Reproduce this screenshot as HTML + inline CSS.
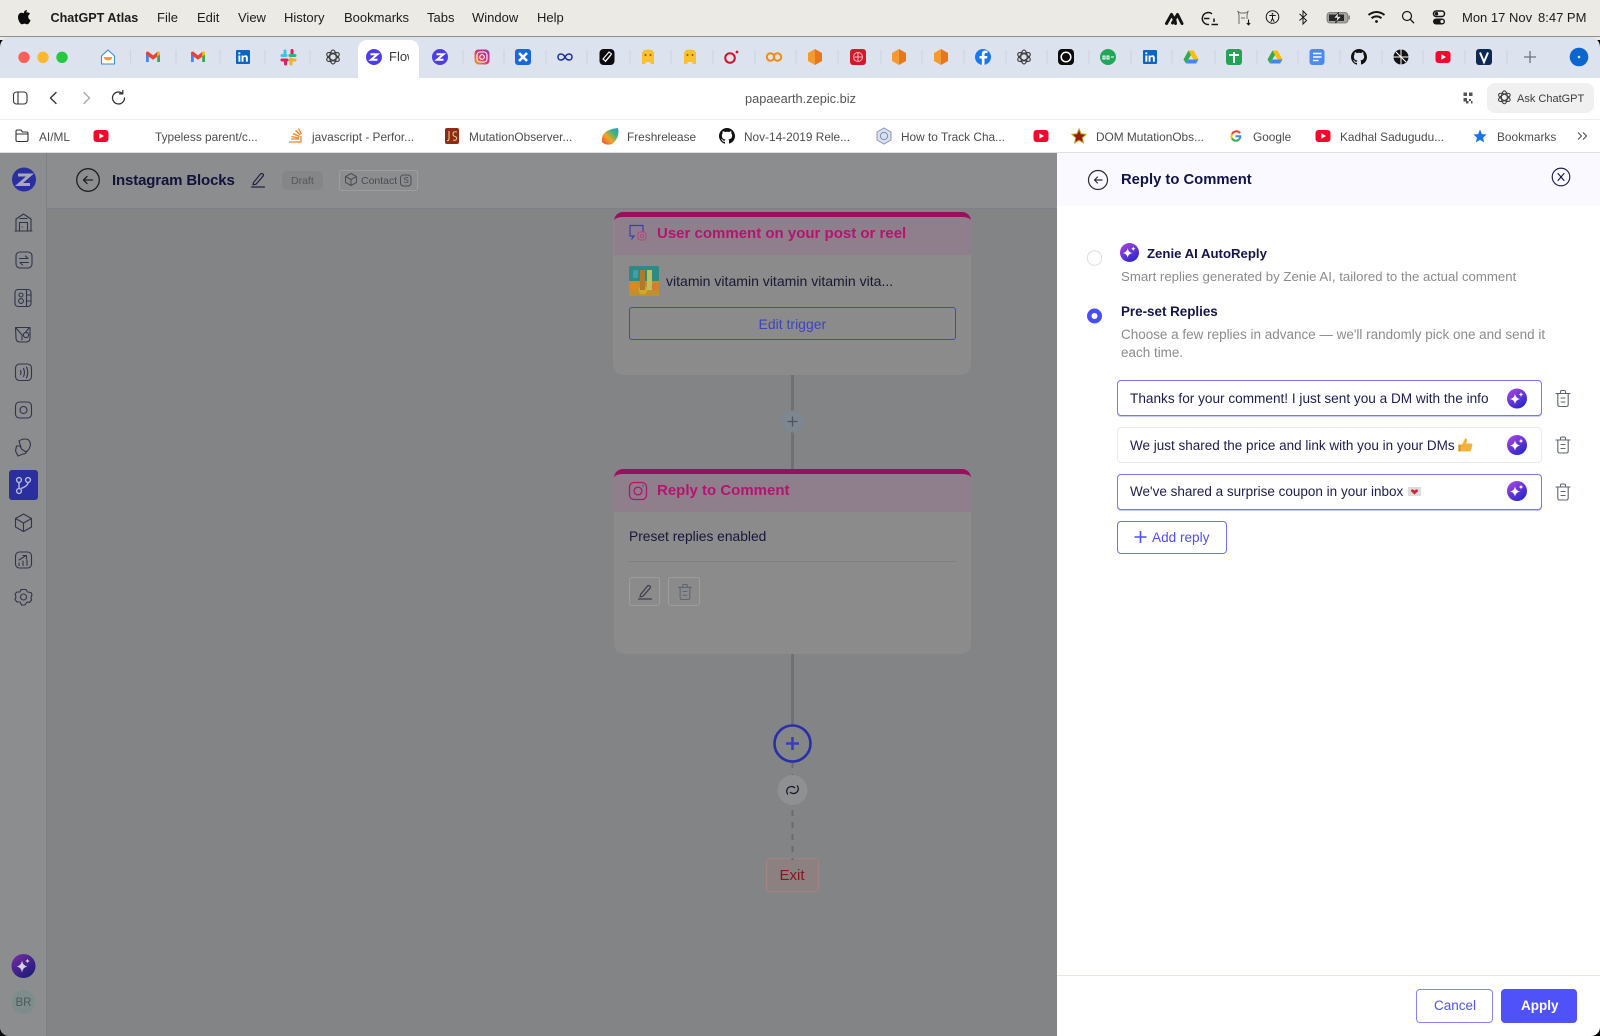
<!DOCTYPE html>
<html lang="en"><head><meta charset="utf-8"><title>Flow</title>
<style>
html,body{margin:0;padding:0;width:1600px;height:1036px;overflow:hidden;background:#000}
body{position:relative;font-family:"Liberation Sans",sans-serif}
div,span.t{position:absolute;box-sizing:border-box}
.t{white-space:nowrap;line-height:20px;height:20px;display:block}
.m{font-size:13px;color:#1c1c1c;top:8px}
.b{font-size:11.85px;color:#4c4c4c;top:127px}
.ct{font-size:15px;font-weight:bold;color:#b5136f;left:657px}
.d{font-size:13.5px;color:#8b8b8b;left:1121px}
.inp{left:1117px;width:425px;height:36px;background:#fff;border-radius:4px}
.on{border:1px solid #7576f7;box-shadow:0 1px 0 #c9caf8}
.it{font-size:13.5px;color:#1d1d50;left:1130px}
svg{position:absolute;left:0;top:0;overflow:visible}
</style></head><body>
<div style="left:0;top:0;width:1600px;height:40px;background:#ebeae5"></div>
<div style="left:0;top:36px;width:1600px;height:1px;background:#8f8f8c"></div>
<div style="left:0;top:37px;width:1600px;height:41px;background:#dce2ee;border-radius:10px 10px 0 0"></div>
<div style="left:358px;top:40px;width:61px;height:38px;background:#fff;border-radius:9px 9px 0 0"></div>
<div style="left:0;top:78px;width:1600px;height:42px;background:#fff;border-bottom:1px solid #eeeeee"></div>
<div style="left:0;top:120px;width:1600px;height:33px;background:#fff;border-bottom:1px solid #dedede"></div>
<div style="left:1487px;top:83px;width:107px;height:30px;background:#f0f0f0;border-radius:8px"></div>

<div style="left:0;top:153px;width:1600px;height:883px;border-radius:0 0 9px 9px;overflow:hidden;background:#838486">
 <div style="left:0;top:0;width:47px;height:883px;background:#8c8d8f;border-right:1px solid #7d7f84"></div>
 <div style="left:47px;top:0;width:1010px;height:56px;background:#8c8d8f;border-bottom:1px solid #7e8087"></div>
 <div style="left:9px;top:317px;width:29px;height:30px;background:#2a2e9f;border-radius:3px"></div>
 <div style="left:282px;top:18px;width:41px;height:19px;background:#858688;border-radius:5px"></div>
 <div style="left:339px;top:17px;width:79px;height:21px;border:1px solid #9d9ea0;border-radius:3px"></div>
 <div style="left:791px;top:222px;width:3px;height:94px;background:#6f7072"></div>
 <div style="left:791px;top:501px;width:3px;height:72px;background:#6f7072"></div>

 <div style="left:613px;top:59px;width:358px;height:163px;background:#8b8b8c;border-radius:10px"></div>
 <div style="left:614px;top:59px;width:357px;height:43px;background:#8f7f8c;border-top:5px solid #9b0f5f;border-radius:9px 9px 0 0"></div>
 <div style="left:629px;top:154px;width:327px;height:33px;border:1px solid #4447b8;border-radius:3px"></div>

 <div style="left:614px;top:316px;width:357px;height:185px;background:#8b8b8c;border-radius:10px"></div>
 <div style="left:614px;top:316px;width:357px;height:43px;background:#8f7f8c;border-top:5px solid #9b0f5f;border-radius:9px 9px 0 0"></div>
 <div style="left:629px;top:408px;width:327px;height:1px;background:#7e7f80"></div>
 <div style="left:629px;top:424px;width:31px;height:29px;border:1px solid #9c9d9f;border-radius:3px"></div>
 <div style="left:668px;top:424px;width:32px;height:29px;border:1px solid #9c9d9f;border-radius:3px"></div>

 <div style="left:766px;top:705px;width:53px;height:34px;background:#8d8080;border:1px solid #a08383;border-radius:4px"></div>

 <div style="left:1057px;top:0;width:543px;height:883px;background:#fff"></div>
 <div style="left:1057px;top:0;width:543px;height:53px;background:#f9f9ff"></div>
 <div style="left:1057px;top:822px;width:543px;height:1px;background:#e4e6f2"></div>
</div>

<div class="inp on" style="top:380px"></div>
<div class="inp" style="top:427px;border:1px solid #e6e8f5"></div>
<div class="inp on" style="top:474px"></div>
<div style="left:1117px;top:521px;width:110px;height:33px;border:1px solid #6f70f4;border-radius:4px;background:#fff"></div>
<div style="left:1416px;top:989px;width:77px;height:34px;border:1px solid #8586f6;border-radius:4px;background:#fff"></div>
<div style="left:1501px;top:989px;width:76px;height:34px;background:#4f52f8;border-radius:4px"></div>

<svg width="1600" height="1036" viewBox="0 0 1600 1036">
<defs>
<linearGradient id="sg" x1="0.15" y1="0.05" x2="0.8" y2="0.95"><stop offset="0" stop-color="#a644e0"/><stop offset="1" stop-color="#2727c9"/></linearGradient>
<linearGradient id="sgd" x1="0.15" y1="0.05" x2="0.8" y2="0.95"><stop offset="0" stop-color="#6f2aa0"/><stop offset="1" stop-color="#1c1c78"/></linearGradient>
<linearGradient id="ig" x1="0" y1="1" x2="1" y2="0"><stop offset="0" stop-color="#f9a825"/><stop offset=".5" stop-color="#e1306c"/><stop offset="1" stop-color="#8a3ab9"/></linearGradient>
<linearGradient id="fr" x1="0" y1="1" x2="1" y2="0"><stop offset="0" stop-color="#e8453c"/><stop offset=".4" stop-color="#f5a623"/><stop offset=".7" stop-color="#3cb878"/><stop offset="1" stop-color="#2f8fe8"/></linearGradient>
<symbol id="spark" viewBox="0 0 20 20"><circle cx="10" cy="10" r="10" fill="url(#sg)"/><path d="M8 5.5 Q8.8 9.8 13 10.5 Q8.8 11.2 8 15.5 Q7.2 11.2 3 10.5 Q7.2 9.8 8 5.5Z" fill="#fff"/><path d="M14 3.5 Q14.3 5.7 16.5 6 Q14.3 6.3 14 8.5 Q13.7 6.3 11.5 6 Q13.7 5.7 14 3.5Z" fill="#fff"/></symbol>
<symbol id="z" viewBox="0 0 16 16"><circle cx="8" cy="8" r="8" fill="#4c3de8"/><path d="M4.5 5.2H11.5L5 10.8H11.5" fill="none" stroke="#fff" stroke-width="2"/></symbol>
<symbol id="gm" viewBox="0 0 16 16"><path d="M1 3.5V13H3.8V6.5Z" fill="#4285f4"/><path d="M15 3.5V13H12.2V6.5Z" fill="#34a853"/><path d="M1 3.5Q2 1.8 3.8 3L8 6.4 12.2 3Q14 1.8 15 3.5L15 5.5 12.2 7.8 8 10.8 3.8 7.8 1 5.5Z" fill="#ea4335"/><path d="M12.2 3Q14 1.8 15 3.5V5.5L12.2 7.8Z" fill="#fbbc04"/></symbol>
<symbol id="li" viewBox="0 0 16 16"><rect x="1" y="1" width="14" height="14" rx="1" fill="#0a66c2"/><path d="M3.4 6.5H5.3V12.8H3.4ZM3.4 3.4H5.3V5.2H3.4ZM6.6 6.5H8.4V7.4Q9.2 6.3 10.6 6.3 12.8 6.3 12.8 9V12.8H10.9V9.4Q10.9 7.9 9.8 7.9 8.5 7.9 8.5 9.4V12.8H6.6Z" fill="#fff"/></symbol>
<symbol id="oa" viewBox="0 0 16 16"><g fill="none" stroke="#3a3a3a" stroke-width="1.1"><ellipse cx="8" cy="8" rx="3.2" ry="7"/><ellipse cx="8" cy="8" rx="3.2" ry="7" transform="rotate(60 8 8)"/><ellipse cx="8" cy="8" rx="3.2" ry="7" transform="rotate(120 8 8)"/></g></symbol>
<symbol id="cube" viewBox="0 0 16 16"><path d="M8 0L15 4V12L8 16Z" fill="#e8761a"/><path d="M8 0L1 4V12L8 16Z" fill="#f59a2e"/></symbol>
<symbol id="yt" viewBox="0 0 16 16"><rect x="0.5" y="2" width="15" height="12" rx="3" fill="#f4082b"/><path d="M6.3 5.2L11 8 6.3 10.8Z" fill="#fff"/></symbol>
<symbol id="drive" viewBox="0 0 16 16"><path d="M5.5 1.5H10.5L15.5 10.5H10.5Z" fill="#fbbc04"/><path d="M5.5 1.5L.5 10.5 3 14.5 8 6Z" fill="#34a853"/><path d="M3 14.5H13L15.5 10.5H5.5Z" fill="#4285f4"/></symbol>
<symbol id="gh" viewBox="0 0 16 16"><path fill="#111" d="M8 0C3.6 0 0 3.6 0 8c0 3.5 2.3 6.5 5.5 7.6.4.1.5-.2.5-.4v-1.4c-2.2.5-2.7-1-2.7-1-.4-.9-.9-1.2-.9-1.2-.7-.5.1-.5.1-.5.8.1 1.2.8 1.2.8.7 1.2 1.9.9 2.3.7.1-.5.3-.9.5-1.1-1.8-.2-3.6-.9-3.6-4 0-.9.3-1.6.8-2.1-.1-.2-.4-1 .1-2.1 0 0 .7-.2 2.2.8.6-.2 1.3-.3 2-.3s1.4.1 2 .3c1.5-1 2.2-.8 2.2-.8.4 1.1.2 1.9.1 2.1.5.6.8 1.3.8 2.1 0 3.1-1.9 3.7-3.7 3.9.3.3.6.8.6 1.5v2.2c0 .2.1.5.6.4C13.7 14.5 16 11.5 16 8c0-4.4-3.6-8-8-8z"/></symbol>
<symbol id="trash" viewBox="0 0 16 18"><g fill="none" stroke="#5e6470" stroke-width="1.1" stroke-linecap="round" stroke-linejoin="round"><path d="M1 4H15M5.5 4V2.2Q5.5 1 6.7 1H9.3Q10.5 1 10.5 2.2V4M2.8 4V15Q2.8 17 4.8 17H11.2Q13.2 17 13.2 15V4M6 8.5H10M6 12.5H10"/></g></symbol>
<symbol id="pen" viewBox="0 0 16 16"><g fill="none" stroke="currentColor" stroke-width="1.2" stroke-linecap="round" stroke-linejoin="round"><path d="M3.5 10.5L10.500 2Q11.500 1 12.800 2 14 3 13 4.200L6 12.200 3 12.800ZM1.500 15H14.500"/></g></symbol>
</defs>

<!-- menu bar -->
<path d="M25.6 13.4c.9-1 1.4-1.6 1.2-3-1 .1-2.300.9-2.700 2-.3.9-.1 1.100 0 1.300-.8 0-1.700-.6-2.800-.5-1.900.2-3.300 2-3.300 4.600 0 3 2.300 7 4 7 1 0 1.500-.7 2.600-.7s1.500.7 2.600.7c1.500 0 2.900-2.600 3.300-4.200-1.500-.6-2.300-1.900-2.300-3.300 0-1.300.7-2.300 1.900-3-.9-1.200-2.100-1.600-3.100-1.600-.5 0-.9.1-1.400.7z" fill="#0a0a0a" transform="translate(0,-.5)"/>
<path d="M1166.500 23.500L1171.500 14.500M1171.500 14.500L1175 20.500L1175.500 23.500M1172.500 23L1177.500 14.500L1182 23.500" fill="none" stroke="#141414" stroke-width="3" stroke-linecap="round" stroke-linejoin="round"/>
<g fill="none" stroke="#161616" stroke-width="1.5">
<path d="M1212 13.800A6 6 0 1 0 1209 24.500M1204 18.500H1209.500M1214 18.500V22M1211.500 24.500H1218"/>
<path d="M1239 24V15L1238 11.500 1240.500 13H1245.500L1248 11.500 1247 15V19M1241 18H1245" stroke="#6a6a68" stroke-width="1"/><path d="M1248.500 19.500V24.500M1246.800 23L1248.500 24.800 1250.200 23" stroke-width="1.100"/>
<circle cx="1272.500" cy="17" r="6.300" stroke-width="1"/><circle cx="1272.500" cy="13.800" r=".9" fill="#161616" stroke="none"/><path d="M1269.300 15.500H1275.700M1272.500 15.500V18.500L1270.800 21.800M1272.500 18.500L1274.200 21.800" stroke-width="1"/>
<path d="M1299.500 13.800L1306.500 20.500 1303 24V11L1306.500 14.500 1299.500 20.500" stroke-width="1"/>
</g>
<rect x="1327" y="12.500" width="21" height="10.500" rx="3" fill="#a6a5a0" stroke="#6f6e6a" stroke-width=".8"/><rect x="1329" y="14.500" width="15" height="6.500" fill="#2a2a2a"/><rect x="1348.600" y="15.500" width="1.400" height="4" fill="#8a8a86"/><path d="M1338.500 12.500L1333.500 18H1337L1335.500 23 1341.500 16.500H1338Z" fill="#e6e5e0" stroke="#111" stroke-width=".6"/>
<g fill="none" stroke="#161616"><path d="M1368.500 15Q1376.500 9 1384.500 15M1371.500 18.200Q1376.500 14.500 1381.500 18.200" stroke-width="2"/><circle cx="1376.500" cy="21.500" r="1.400" fill="#111" stroke="none"/>
<circle cx="1407" cy="16" r="4.500" stroke-width="1.200"/><path d="M1410.300 19.300L1414 23.200" stroke-width="1.400"/>
<rect x="1433.500" y="11" width="11" height="5.500" rx="2.700" stroke-width="1.500"/><circle cx="1436.500" cy="13.700" r="1.700" fill="#161616" stroke="none"/><rect x="1433" y="18.500" width="12" height="6" rx="3" fill="#161616" stroke="none"/><circle cx="1442" cy="21.500" r="1.600" fill="#ebeae5" stroke="none"/></g>

<!-- traffic lights -->
<circle cx="24" cy="57.300" r="5.700" fill="#fc5f57"/><circle cx="43" cy="57.300" r="5.700" fill="#fdb92e"/><circle cx="62" cy="57.300" r="5.700" fill="#27c840"/>
<!-- tab separators -->
<path stroke="#cdd3e0" stroke-width="1" fill="none" d="M130.500 50v14M176 50v14M220 50v14M265 50v14M310 50v14M463 50v14M504 50v14M546 50v14M587 50v14M630 50v14M671 50v14M713 50v14M755 50v14M796 50v14M838 50v14M881 50v14M922 50v14M964 50v14M1006 50v14M1047 50v14M1089 50v14M1131 50v14M1172 50v14M1215 50v14M1257 50v14M1298 50v14M1340 50v14M1382 50v14M1423 50v14M1465 50v14M1507 50v14"/>
<!-- tab icons -->
<path d="M108 50L114.500 56V64H101.500V56Z" fill="#fff" stroke="#3f8fd0" stroke-width="1.100"/><path d="M103.500 57H112.500Q111.500 60.500 108 60.500 104.500 60.500 103.500 57Z" fill="#f0a030"/>
<use href="#gm" x="145" y="49" width="16" height="16"/><use href="#gm" x="190" y="49" width="16" height="16"/>
<use href="#li" x="235" y="49" width="16" height="16"/>
<g stroke-width="3" stroke-linecap="round" fill="none"><path d="M285 51V54" stroke="#36c5f0"/><path d="M282 55.500H286" stroke="#36c5f0"/><path d="M292 50.500V54" stroke="#e01e5a"/><path d="M290 55.500H295" stroke="#2eb67d"/><path d="M282 60H287" stroke="#e01e5a"/><path d="M285.500 60V64" stroke="#e01e5a"/><path d="M291 59V64" stroke="#ecb22e"/><path d="M290 60H295" stroke="#ecb22e"/></g>
<use href="#oa" x="325" y="49" width="16" height="16"/>
<use href="#z" x="366" y="49" width="16" height="16"/>
<use href="#z" x="432" y="49" width="16" height="16"/>
<rect x="474.500" y="49.500" width="15" height="15" rx="4" fill="url(#ig)"/><rect x="477" y="52" width="10" height="10" rx="3" fill="none" stroke="#fff" stroke-width="1.100"/><circle cx="482" cy="57" r="2.300" fill="none" stroke="#fff" stroke-width="1.100"/>
<rect x="515" y="49" width="16" height="16" rx="3" fill="#1868db"/><path d="M519 53L527 61M527 53L519 61" stroke="#fff" stroke-width="2.600"/>
<path d="M565 57C563 53 558 53 558 57S563 61 565 57C567 53 572 53 572 57S567 61 565 57Z" fill="none" stroke="#1a2fa0" stroke-width="1.500"/>
<rect x="599.500" y="49" width="15" height="16" rx="4" fill="#0b0b0b"/><path d="M603 59L609 52 611.500 54 605.500 61ZM605 62L611 55" fill="none" stroke="#fff" stroke-width="1.100"/>
<g fill="#fbc02d"><path d="M642 64V54Q642 49.500 648 49.500 654 49.500 654 54V64H651L650 62H646L645 64Z"/><path d="M684 64V54Q684 49.500 690 49.500 696 49.500 696 54V64H693L692 62H688L687 64Z"/></g>
<g fill="#7a5a10"><circle cx="645.500" cy="55" r="1"/><circle cx="650.500" cy="55" r="1"/><circle cx="687.500" cy="55" r="1"/><circle cx="692.500" cy="55" r="1"/></g>
<circle cx="730" cy="58" r="4.800" fill="none" stroke="#d3142b" stroke-width="2"/><circle cx="737" cy="52" r="1.400" fill="#d3142b"/>
<g fill="none" stroke="#f28c12" stroke-width="2"><circle cx="770.500" cy="57" r="3.700"/><circle cx="777.500" cy="57" r="3.700"/></g>
<use href="#cube" x="807" y="49" width="16" height="16"/>
<rect x="850" y="49" width="16" height="16" rx="3" fill="#d5182c"/><circle cx="858" cy="57" r="4.500" fill="none" stroke="#f5b5bb"/><path d="M854 57H862M858 53V61" stroke="#f5b5bb"/>
<use href="#cube" x="891" y="49" width="16" height="16"/><use href="#cube" x="933" y="49" width="16" height="16"/>
<circle cx="983" cy="57" r="8" fill="#1877f2"/><path d="M984.500 65V58.500H987L987.400 56H984.500V54.400Q984.500 53 986 53H987.500V50.800Q984.500 50 983 51 981.800 52 981.800 54.200V56H979.500V58.500H981.800V65Z" fill="#fff"/>
<use href="#oa" x="1016" y="49" width="16" height="16"/>
<rect x="1058" y="49" width="16" height="16" rx="4" fill="#0b0b0b"/><circle cx="1066" cy="57" r="4.800" fill="none" stroke="#fff" stroke-width="1.500"/>
<circle cx="1108" cy="57" r="8" fill="#1fa85a"/><path d="M1103 56h2v3h-2zM1107 56h2v3h-2zM1111 57h3" stroke="#fff" fill="none" stroke-width="1"/>
<use href="#li" x="1142" y="49" width="16" height="16"/>
<use href="#drive" x="1183" y="49" width="16" height="16"/>
<rect x="1226" y="49" width="16" height="16" rx="3" fill="#23a455"/><path d="M1229 55H1239M1234 52V63" stroke="#fff" stroke-width="2"/>
<use href="#drive" x="1267" y="49" width="16" height="16"/>
<rect x="1309.500" y="49" width="15" height="16" rx="3" fill="#4c8bf5"/><path d="M1313 53.500H1321.500M1313 57H1321.500M1313 60.500H1318.500" stroke="#fff" stroke-width="1.600"/>
<use href="#gh" x="1351" y="49" width="16" height="16"/>
<circle cx="1401" cy="57" r="7.500" fill="#111"/><path d="M1401 49.500V64.500M1393.500 57H1408.500M1396 52L1406 62" stroke="#fff" stroke-width="1"/>
<use href="#yt" x="1435" y="49" width="16" height="16"/>
<rect x="1476" y="49" width="16" height="16" rx="3" fill="#0e2a54"/><path d="M1480 52.500L1484 62 1488 52.500" fill="none" stroke="#fff" stroke-width="2"/>
<path d="M1530 51V63M1524 57H1536" stroke="#6b7280" stroke-width="1.300"/>
<circle cx="1579" cy="57" r="9.300" fill="#0b66d0"/><circle cx="1579" cy="57" r="1.300" fill="#cfe2ff"/>

<!-- address bar -->
<g fill="none" stroke="#333" stroke-width="1.100" stroke-linecap="round" stroke-linejoin="round">
<rect x="13.500" y="92" width="13.500" height="12" rx="3"/><path d="M18 92V104"/>
<path d="M56 92.500L50.500 98 56 103.500" stroke-width="1.400"/>
<path d="M84 92.500L89.500 98 84 103.500" stroke="#a8a8a8" stroke-width="1.400"/>
<path d="M124.500 98A6 6 0 1 1 122.600 93.600M122.800 90.500V93.800H119.500" stroke-width="1.300"/>
</g>
<path fill="#555" d="M1463.500 92.500h3.500v3.500h-3.500zM1469 92.500h3.500v3.500h-3.500zM1463.500 98h3.500v3.500h-3.500zM1469 99h2v2h-2zM1471 101h1.500v2.500h-1.500zM1466 101h2.500v2.500h-2.500z"/>
<g transform="translate(1497,90) scale(.92)"><use href="#oa" width="16" height="16"/></g>
<!-- bookmarks -->
<path d="M16 131.500Q16 130 17.500 130H21L22.500 132H26.500Q28 132 28 133.500V140Q28 141.500 26.500 141.500H17.500Q16 141.500 16 140Z M16 134H28" fill="none" stroke="#333" stroke-width="1.100"/>
<use href="#yt" x="93" y="128" width="16" height="16"/>
<path d="M289 142H301V136M291 139H299M291.500 136.500L299 138M293 133.500L299.500 136.500M295.500 130.500L300.500 135M298.500 128.500L301.500 134" fill="none" stroke="#f48024" stroke-width="1.300"/>
<rect x="445" y="128" width="14" height="16" rx="2" fill="#8e2b18"/><path d="M449 131V139Q449 141 447 140.500M457 132Q453 131 453 134 453 136 455 136.500 457 137 456.500 139 456 141 453 140" fill="none" stroke="#e7c37a" stroke-width="1.100"/>
<path d="M602 142Q600 130 618 128 620 138 612 144 606 146 602 142Z" fill="url(#fr)"/>
<use href="#gh" x="719" y="128" width="16" height="16"/>
<path d="M884 128L891 132V140L884 144 877 140V132Z" fill="#dbe0ef" stroke="#8a97b8"/><circle cx="884" cy="136" r="3.600" fill="none" stroke="#7f8bb0"/>
<use href="#yt" x="1033" y="128" width="16" height="16"/>
<path d="M1079 129L1081 133.800 1086 134.400 1082.300 137.800 1083.400 142.800 1079 140.200 1074.600 142.800 1075.700 137.800 1072 134.400 1077 133.800Z" fill="#9c1a12" stroke="#c89a22" stroke-width="1"/>
<g fill="none" stroke-width="2"><path d="M1240 133.200A4.600 4.600 0 0 0 1232 134.200" stroke="#ea4335"/><path d="M1235.500 136.200H1240.300Q1240.400 138 1239 139.500" stroke="#4285f4"/><path d="M1232 134.200A4.600 4.600 0 0 0 1232 138.600" stroke="#fbbc04"/><path d="M1232 138.600A4.600 4.600 0 0 0 1239 139.500" stroke="#34a853"/></g>
<use href="#yt" x="1315" y="128" width="16" height="16"/>
<path d="M1480 129.500L1481.900 134.100 1486.500 134.500 1483.100 137.600 1484.100 142.400 1480 139.900 1475.900 142.400 1476.900 137.600 1473.500 134.500 1478.100 134.100Z" fill="#1a73e8"/>
<path d="M1578 132.500L1581.500 136 1578 139.500M1583 132.500L1586.500 136 1583 139.500" fill="none" stroke="#444" stroke-width="1"/>

<!-- app sidebar -->
<circle cx="24" cy="179.500" r="12" fill="#2a2e9f"/><path d="M18 175H30L19 184.500H30" fill="none" stroke="#a8a8b8" stroke-width="3"/>
<g fill="none" stroke="#32344c" stroke-width="1.100" stroke-linecap="round" stroke-linejoin="round">
<path d="M16 231V219L23.500 214 31 219V231ZM15 231H32M19.500 231V222.500H27.500V231M20 218.500H27M22 227H22.400"/>
<rect x="16" y="252" width="16" height="16" rx="4"/><path d="M19.500 258.500H28L25.500 256M28.500 262.500H20L22.500 265"/>
<rect x="15" y="289.500" width="16" height="17" rx="3"/><path d="M26.500 289.500V306.500M26.500 295H31M26.500 301H31"/><circle cx="21" cy="295" r="2"/><circle cx="21" cy="301" r="2.400"/>
<path d="M15.500 327.500H30V338Q30 342 26 342H20Q16 342 16 338ZM16 328L22 335V340M29 328L25 333"/><circle cx="26" cy="335" r="2.600"/>
<rect x="15.500" y="364" width="16" height="16.500" rx="4"/><path d="M20.500 370.500Q21.500 372.500 20.500 374.500M23.500 368.500Q25.500 372.500 23.500 376.500M26.500 367Q29 372.500 26.500 378"/>
<rect x="15.500" y="402" width="16" height="16" rx="4"/><circle cx="23.500" cy="410" r="3.500"/>
<path d="M19 441Q23 438 28 439.500 32 443 29.500 448 28 451 26 452L21.500 449ZM21.500 449L20 446 16.500 446 15.500 451 18 456 23 454Q26.500 454 26.500 451"/>
<path d="M23.500 514L31.500 518.500V527L23.500 531.500 15.500 527V518.500ZM15.500 518.500L23.500 523 31.500 518.500M23.500 523V531.500"/>
<rect x="15.500" y="552" width="16" height="16" rx="4"/><path d="M19 565.500V563M23 565.500V561M27 565.500V560M19 560L26 555.500M23 555.500H26.500V559"/>
<path d="M21 589.500H26L27.500 592 31 592.500 32 595 31 597.500 31.500 600 29.500 602.500 27 602 25 605H21.500L20 602 17 602 15 599.500 16 597 15 594 17 592 20 592Z"/><circle cx="23.500" cy="597" r="3"/>
</g>
<g fill="none" stroke="#b9bbd8" stroke-width="1.400"><circle cx="19" cy="480" r="2.400"/><circle cx="28" cy="480" r="2.400"/><circle cx="19" cy="491" r="2.400"/><path d="M19 482.500V488.500M28 482.500Q28 486 21 488.500"/></g>
<circle cx="23.500" cy="966" r="12" fill="url(#sgd)"/><path d="M22 960.500Q22.800 965.800 27.500 966.500 22.800 967.200 22 972.500 21.200 967.200 16.500 966.500 21.200 965.800 22 960.500Z" fill="#d4d4de"/><path d="M27.500 958.500Q27.800 960.700 30 961 27.800 961.300 27.500 963.500 27.200 961.300 25 961 27.200 960.700 27.500 958.500Z" fill="#d4d4de"/>
<circle cx="23.500" cy="1002" r="12" fill="#7f8c8c"/>

<!-- header icons -->
<g fill="none" stroke="#202026" stroke-width="1.300" stroke-linecap="round" stroke-linejoin="round"><circle cx="88" cy="180" r="11.300"/><path d="M92.500 180H83.500M87 176.500L83.500 180 87 183.500"/></g>
<use href="#pen" x="250" y="172" width="16" height="16" color="#23233f"/>
<path d="M351 173.500L356.500 176.500V182.500L351 185.500 345.500 182.500V176.500ZM345.500 176.500L351 179.500 356.500 176.500M351 179.500V185.500" fill="none" stroke="#4d4e55" stroke-width="1"/>
<rect x="400.500" y="175" width="10.500" height="11" rx="3" fill="none" stroke="#4d4e55"/>

<!-- cards icons -->
<path d="M643 238V224.500H630V235H634L631.500 238.500" fill="none" stroke="#3a3fb0" stroke-width="1.200" transform="translate(0,1)"/>
<rect x="638" y="232" width="8" height="8" rx="2" fill="#8f7f8c" stroke="#b8437f"/><circle cx="642" cy="236" r="1.600" fill="none" stroke="#b8437f" stroke-width=".9"/>
<rect x="629" y="266" width="30" height="30" rx="1" fill="#2e8a84"/><rect x="629" y="281" width="30" height="15" fill="#c0902c"/><circle cx="634" cy="287" r="4" fill="#d98a20"/><circle cx="643" cy="290" r="4.500" fill="#cdaa2a"/><rect x="640" y="270" width="5" height="20" fill="#b07a2a"/><rect x="647" y="270" width="5" height="20" fill="#c0c060"/><rect x="633" y="270" width="5" height="8" fill="#3f9fa8"/><circle cx="655" cy="287" r="3.500" fill="#d97a30"/>
<rect x="629.500" y="482.500" width="17" height="17" rx="4.500" fill="none" stroke="#b5136f" stroke-width="1.300"/><circle cx="638" cy="491" r="3.900" fill="none" stroke="#b5136f" stroke-width="1.300"/><circle cx="643" cy="485.800" r=".8" fill="#b5136f"/>
<use href="#pen" x="637" y="584" width="16" height="16" color="#3d3e4c"/>
<use href="#trash" x="677.500" y="583.500" width="15" height="17"/>
<!-- connectors -->
<circle cx="792.500" cy="421.500" r="11" fill="#7e8692"/><path d="M792.500 416.500V426.500M787.500 421.500H797.500" stroke="#4e525b" stroke-width="1.300"/>
<path d="M792.500 762V860" stroke="#6a6b6d" stroke-width="2" stroke-dasharray="6 6" fill="none"/>
<circle cx="792.500" cy="743.500" r="18" fill="#858688" stroke="#2a2ea8" stroke-width="2.600"/><path d="M792.500 737V750M786 743.500H799" stroke="#3a3eb4" stroke-width="2.600"/>
<circle cx="792.500" cy="790" r="15" fill="#8f9091"/><g fill="none" stroke="#14142e" stroke-width="1.200"><path d="M788 794.500A4.400 4.400 0 1 1 795 788"/><path d="M797 785.500A4.400 4.400 0 1 1 790 792"/></g>

<!-- panel icons -->
<g fill="none" stroke="#2b2b33" stroke-width="1.200" stroke-linecap="round" stroke-linejoin="round"><circle cx="1098" cy="180" r="9.500"/><path d="M1102 180H1094.500M1097.500 177L1094.500 180 1097.500 183"/></g>
<g fill="none" stroke="#16164d" stroke-width="1.100" stroke-linecap="round"><circle cx="1561" cy="177" r="8.800"/><path d="M1558 173.500L1564 180.500M1564 173.500L1558 180.500"/></g>
<circle cx="1094.500" cy="258" r="7.200" fill="#fff" stroke="#dedede"/>
<use href="#spark" x="1120" y="243" width="19" height="19"/>
<circle cx="1094.500" cy="316" r="7.500" fill="#4a4ff5"/><circle cx="1094.500" cy="316" r="3" fill="#fff"/>
<use href="#spark" x="1507" y="388.500" width="20" height="20"/><use href="#spark" x="1507" y="435" width="20" height="20"/><use href="#spark" x="1507" y="481" width="20" height="20"/>
<use href="#trash" x="1555" y="389.500" width="16" height="18"/><use href="#trash" x="1555" y="436" width="16" height="18"/><use href="#trash" x="1555" y="483" width="16" height="18"/>
<path d="M1140.500 531V543M1134.500 537H1146.500" stroke="#4f4ff5" stroke-width="1.600"/>
<!-- emoji -->
<path d="M1460 451V444.500H1462L1465 438.500Q1467 438 1467 440.500L1466.200 443.500H1471Q1472.800 443.800 1472.200 446L1470.800 450.500Q1470.500 451.500 1469 451.500H1463Z" fill="#f2b33d"/><rect x="1458.300" y="444.500" width="2.400" height="7" fill="#d99a25"/>
<rect x="1408" y="487" width="13" height="9" fill="#dcdcdc"/><path d="M1414.500 494.500L1411 491.200Q1411 489 1413 489.500L1414.500 490.500 1416 489.500Q1418 489 1418 491.200Z" fill="#d8203a"/>
</svg>

<!-- text -->
<span class="t m" style="left:50.500px;font-weight:bold;font-size:12.600px">ChatGPT Atlas</span>
<span class="t m" style="left:157px">File</span><span class="t m" style="left:197px">Edit</span><span class="t m" style="left:238px">View</span><span class="t m" style="left:284px">History</span><span class="t m" style="left:344px">Bookmarks</span><span class="t m" style="left:427px">Tabs</span><span class="t m" style="left:472px">Window</span><span class="t m" style="left:537px">Help</span>
<span class="t m" style="left:1462px">Mon 17 Nov</span><span class="t m" style="left:1538px">8:47 PM</span>
<span class="t" style="left:389px;top:47px;font-size:13px;color:#3c3c3c;width:20px;overflow:hidden">Flow</span>
<span class="t" style="left:745px;top:89px;font-size:12.800px;color:#555">papaearth.zepic.biz</span>
<span class="t" style="left:1517px;top:88.500px;font-size:11px;color:#3d3d3d">Ask ChatGPT</span>
<span class="t b" style="left:39px">AI/ML</span><span class="t b" style="left:155px">Typeless parent/c...</span><span class="t b" style="left:312px">javascript - Perfor...</span><span class="t b" style="left:469px">MutationObserver...</span><span class="t b" style="left:627px">Freshrelease</span><span class="t b" style="left:744px">Nov-14-2019 Rele...</span><span class="t b" style="left:901px">How to Track Cha...</span><span class="t b" style="left:1096px">DOM MutationObs...</span><span class="t b" style="left:1253px">Google</span><span class="t b" style="left:1340px">Kadhal Sadugudu...</span><span class="t b" style="left:1497px">Bookmarks</span>

<span class="t" style="left:112px;top:170.500px;font-size:15px;letter-spacing:-.15px;font-weight:bold;color:#12123a">Instagram Blocks</span>
<span class="t" style="left:291px;top:170.500px;font-size:10.500px;color:#56575b">Draft</span>
<span class="t" style="left:361px;top:171px;font-size:10.500px;color:#4a4b52">Contact</span>
<span class="t" style="left:403.500px;top:170.500px;font-size:8px;color:#4a4b52">S</span>
<span class="t" style="left:23.500px;top:993px;font-size:11.500px;color:#4d5a5c;transform:translateX(-50%)">BR</span>

<span class="t ct" style="top:224px">User comment on your post or reel</span>
<span class="t" style="left:666px;top:270.500px;font-size:14.050px;color:#191932">vitamin vitamin vitamin vitamin vita...</span>
<span class="t" style="left:758.500px;top:313.500px;font-size:14px;color:#3f44b8">Edit trigger</span>
<span class="t ct" style="top:481px">Reply to Comment</span>
<span class="t" style="left:629px;top:526.500px;font-size:13.800px;color:#16163a">Preset replies enabled</span>
<span class="t" style="left:779.500px;top:866px;font-size:15px;color:#8a1420">Exit</span>

<span class="t" style="left:1121px;top:169.500px;font-size:14.800px;font-weight:bold;color:#12124a">Reply to Comment</span>
<span class="t" style="left:1147px;top:243.500px;font-size:13.200px;font-weight:bold;color:#14144a">Zenie AI AutoReply</span>
<span class="t d" style="top:266.500px;font-size:13.220px">Smart replies generated by Zenie AI, tailored to the actual comment</span>
<span class="t" style="left:1121px;top:301.500px;font-size:13.400px;font-weight:bold;color:#14144a">Pre-set Replies</span>
<span class="t d" style="top:324.500px;font-size:13.470px">Choose a few replies in advance — we'll randomly pick one and send it</span>
<span class="t d" style="top:342.500px;font-size:13.470px">each time.</span>
<span class="t it" style="top:388.500px;font-size:13.620px">Thanks for your comment! I just sent you a DM with the info</span>
<span class="t it" style="top:435.500px">We just shared the price and link with you in your DMs</span>
<span class="t it" style="top:481.500px">We've shared a surprise coupon in your inbox</span>
<span class="t" style="left:1152px;top:528px;font-size:13.600px;color:#4f4ff5">Add reply</span>
<span class="t" style="left:1434px;top:996px;font-size:13.500px;color:#4f52f5">Cancel</span>
<span class="t" style="left:1521px;top:996px;font-size:13.500px;font-weight:bold;color:#fff">Apply</span>
</body></html>
